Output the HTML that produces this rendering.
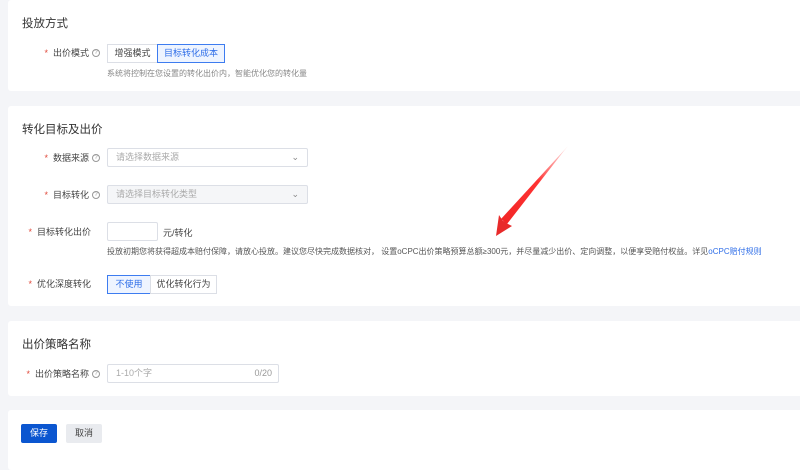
<!DOCTYPE html>
<html><head><meta charset="utf-8"><style>
*{margin:0;padding:0;box-sizing:border-box}
body{width:800px;height:451px;overflow:hidden;background:#f4f5f8;font-family:"Liberation Sans","Noto Sans CJK SC",sans-serif;color:#333;position:relative}
.card{position:absolute;left:8px;width:800px;background:#fff;border-radius:3px}
.abs{position:absolute;white-space:nowrap}
.title{font-size:11.5px;color:#333;left:14px}
.lbl{font-size:9px;color:#444;text-align:right;width:92px;left:0;line-height:12px}
.lbl b{color:#e0483a;font-weight:normal;margin-right:5px}
.q{display:inline-block;width:8px;height:8px;border:1px solid #999;border-radius:50%;font-size:6px;line-height:6px;text-align:center;color:#999;margin-left:3px;vertical-align:middle;position:relative;top:-1px}
.box{border:1px solid #dcdfe6;border-radius:2px;font-size:9px;color:#aaa;padding-left:8px}
.btn{border:1px solid #dcdfe6;font-size:9px;color:#444;text-align:center}
.on{border-color:#3d7cf0;background:#eef4ff;color:#2f6ee8}
.hint{font-size:8px;color:#888}
</style></head><body>
<div class="card" style="top:0;height:91px">
 <div class="abs title" style="top:15px">投放方式</div>
 <div class="abs lbl" style="top:47px"><b>*</b>出价模式<span class="q">?</span></div>
 <div class="abs btn" style="left:99px;top:44px;width:51px;height:19px;line-height:17px">增强模式</div>
 <div class="abs btn on" style="left:149px;top:44px;width:68px;height:19px;line-height:17px">目标转化成本</div>
 <div class="abs hint" style="left:99px;top:68px">系统将控制在您设置的转化出价内，智能优化您的转化量</div>
</div>
<div class="card" style="top:106px;height:200px">
 <div class="abs title" style="top:15px">转化目标及出价</div>
 <div class="abs lbl" style="top:46px"><b>*</b>数据来源<span class="q">?</span></div>
 <div class="abs box" style="left:99px;top:42px;width:201px;height:19px;line-height:17px">请选择数据来源<span style="position:absolute;right:8px;color:#888">⌄</span></div>
 <div class="abs lbl" style="top:83px"><b>*</b>目标转化<span class="q">?</span></div>
 <div class="abs box" style="left:99px;top:79px;width:201px;height:19px;line-height:17px;background:#f5f6f8">请选择目标转化类型<span style="position:absolute;right:8px;color:#888">⌄</span></div>
 <div class="abs lbl" style="top:120px;width:83px"><b>*</b>目标转化出价</div>
 <div class="abs box" style="left:99px;top:116px;width:51px;height:19px"></div>
 <div class="abs" style="left:155px;top:120px;font-size:9px;color:#444">元/转化</div>
 <div class="abs hint" style="left:99px;top:140px;color:#555">投放初期您将获得超成本赔付保障，请放心投放。建议您尽快完成数据核对， 设置oCPC出价策略预算总额≥300元，并尽量减少出价、定向调整，以便享受赔付权益。详见<span style="color:#2f6ee8">oCPC赔付规则</span></div>
 <div class="abs lbl" style="top:172px;width:83px"><b>*</b>优化深度转化</div>
 <div class="abs btn on" style="left:99px;top:169px;width:44px;height:19px;line-height:17px">不使用</div>
 <div class="abs btn" style="left:142px;top:169px;width:67px;height:19px;line-height:17px">优化转化行为</div>
</div>
<div class="card" style="top:321px;height:75px">
 <div class="abs title" style="top:15px">出价策略名称</div>
 <div class="abs lbl" style="top:47px"><b>*</b>出价策略名称<span class="q">?</span></div>
 <div class="abs box" style="left:99px;top:43px;width:172px;height:19px;line-height:17px">1-10个字<span style="position:absolute;right:6px;color:#999">0/20</span></div>
</div>
<div class="card" style="top:410px;height:60px">
 <div class="abs" style="left:13px;top:14px;width:36px;height:19px;background:#0b56d0;color:#fff;font-size:9px;line-height:19px;text-align:center;border-radius:2px">保存</div>
 <div class="abs" style="left:58px;top:14px;width:36px;height:19px;background:#e9ebef;color:#444;font-size:9px;line-height:19px;text-align:center;border-radius:2px">取消</div>
</div>
<svg class="abs" style="left:0;top:0" width="800" height="451"><defs><linearGradient id="g" x1="568" y1="146" x2="496" y2="236" gradientUnits="userSpaceOnUse"><stop offset="0" stop-color="#f66" stop-opacity=".2"/><stop offset=".4" stop-color="#f33"/><stop offset="1" stop-color="#e22"/></linearGradient></defs>
<path d="M568 146 L505 222 L501 219 Z M567 147 L507 224 L503 221Z" fill="url(#g)"/>
<path d="M496 236 L499 215 L503 221 L508 224 L512 226 Z" fill="#e82a2a"/>
</svg>
</body></html>
